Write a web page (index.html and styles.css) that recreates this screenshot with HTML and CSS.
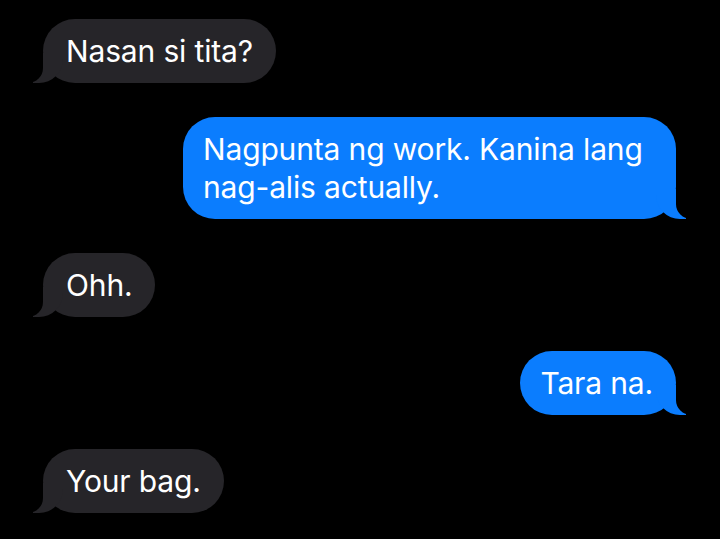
FILE: index.html
```html
<!DOCTYPE html>
<html>
<head>
<meta charset="utf-8">
<link rel="stylesheet" href="styles.css">
</head>
<body>
<div class="thread">
  <div class="msg recv">Nasan si tita?</div>
  <div class="msg sent">Nagpunta ng work. Kanina lang nag-alis actually.</div>
  <div class="msg recv">Ohh.</div>
  <div class="msg sent">Tara na.</div>
  <div class="msg recv">Your bag.</div>
</div>
</body>
</html>
```
FILE: styles.css
```css
html, body {
  margin: 0;
  background: #000;
}
.thread {
  display: flex;
  flex-direction: column;
  gap: 34px;
  padding: 19px 44px 0 43px;
  font-family: "Inter", "Liberation Sans", sans-serif;
  font-size: 30px;
  line-height: 38px;
  color: #fff;
  letter-spacing: -0.15px;
}
.msg {
  position: relative;
  max-width: 450px;
  border-radius: 32px;
}
.recv {
  align-self: flex-start;
  padding: 13px 23px 13px 23px;
  background: #262529;
}
.sent {
  align-self: flex-end;
  padding: 13px 23px 13px 20px;
  background: #0b7dfe;
}
.msg::before,
.msg::after {
  content: "";
  position: absolute;
  bottom: 0;
  height: 30px;
}
.recv::before {
  left: -10px;
  width: 30px;
  background: #262529;
  border-bottom-right-radius: 24px;
}
.recv::after {
  left: -39px;
  width: 39px;
  background: #000;
  border-bottom-right-radius: 15px;
}
.sent::before {
  right: -10px;
  width: 30px;
  background: #0b7dfe;
  border-bottom-left-radius: 24px;
}
.sent::after {
  right: -39px;
  width: 39px;
  background: #000;
  border-bottom-left-radius: 15px;
}
```
